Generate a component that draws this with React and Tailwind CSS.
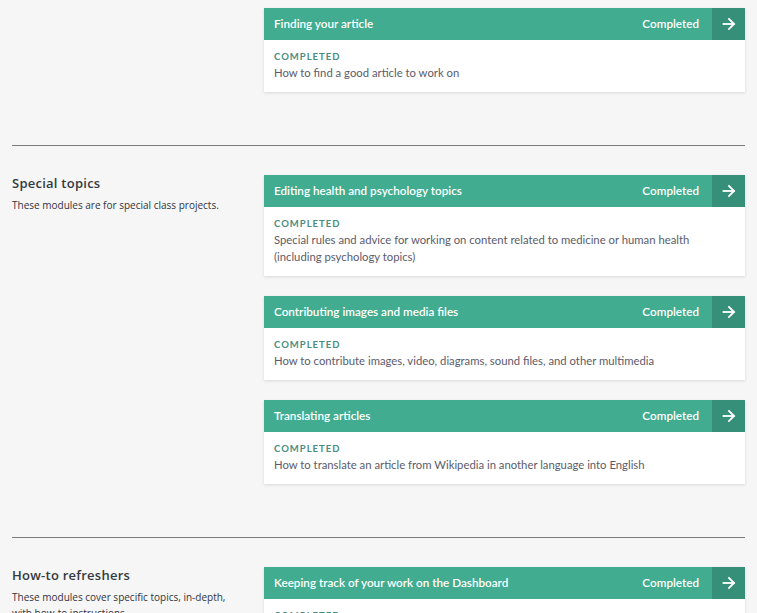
import React from 'react';

const SECTIONS = [
  {
    id: 'getting-started',
    title: null,
    modules: [
      { name: 'Finding your article', desc: 'How to find a good article to work on' },
    ],
  },
  {
    id: 'special',
    title: 'Special topics',
    blurb: 'These modules are for special class projects.',
    modules: [
      {
        name: 'Editing health and psychology topics',
        desc: 'Special rules and advice for working on content related to medicine or human health (including psychology topics)',
      },
      {
        name: 'Contributing images and media files',
        desc: 'How to contribute images, video, diagrams, sound files, and other multimedia',
      },
      {
        name: 'Translating articles',
        desc: 'How to translate an article from Wikipedia in another language into English',
      },
    ],
  },
  {
    id: 'refreshers',
    title: 'How-to refreshers',
    blurb: 'These modules cover specific topics, in-depth, with how-to instructions.',
    modules: [
      { name: 'Keeping track of your work on the Dashboard', desc: 'How to use the Dashboard to keep track of your work' },
    ],
  },
];

function ArrowIcon() {
  return (
    <svg width="14" height="14" viewBox="0 0 14 14" fill="none" stroke="white" strokeWidth="1.8" strokeLinecap="square">
      <path d="M1.5 7h10.5" />
      <path d="M7 2l5 5-5 5" />
    </svg>
  );
}

function ModuleCard({ module }) {
  return (
    <div className="bg-white shadow-[0_1px_3px_rgba(0,0,0,0.12)]">
      {/* Header */}
      <div className="flex h-[32px] bg-[#41ac8f] text-white">
        <div className="flex-1 flex items-center justify-between pl-[10px] pr-[13px]">
          <span className="text-[11.7px] font-semibold">{module.name}</span>
          <span className="text-[11.7px] font-semibold">Completed</span>
        </div>
        <div className="w-[33px] flex items-center justify-center bg-[#368f78]">
          <ArrowIcon />
        </div>
      </div>

      {/* Body */}
      <div className="px-[10px] pt-[10px] pb-[11px]">
        <div className="text-[9.5px] font-bold tracking-[1px] text-[#4b8c82] leading-[14px]">COMPLETED</div>
        <p className="text-[11.3px] text-[#5b5b6b] leading-[17px]">{module.desc}</p>
      </div>
    </div>
  );
}

export default function App() {
  return (
    <div className="min-h-screen bg-[#f6f6f6] pl-[12px] pr-[12px] overflow-hidden" style={{ fontFamily: 'Lato, "Open Sans", sans-serif' }}>
      {SECTIONS.map((section, i) => (
        <section
          key={section.id}
          className={`flex pb-[53px] ${i === 0 ? 'pt-[8px]' : 'pt-[29px] border-t border-[#7a7a7a]'}`}
        >
          <div className="w-[252px] shrink-0 pr-[24px] font-['Open_Sans',sans-serif]">
            {section.title && (
              <>
                <h2 className="-mt-[1px] text-[13px] font-semibold tracking-[0.25px] text-[#333a40] leading-[18px]">
                  {section.title}
                </h2>
                <p className="mt-[5px] text-[10px] text-[#333340] leading-[16px]">{section.blurb}</p>
              </>
            )}
          </div>
          <div className="flex-1 flex flex-col gap-[20px]">
            {section.modules.map((m) => (
              <ModuleCard key={m.name} module={m} />
            ))}
          </div>
        </section>
      ))}
    </div>
  );
}
